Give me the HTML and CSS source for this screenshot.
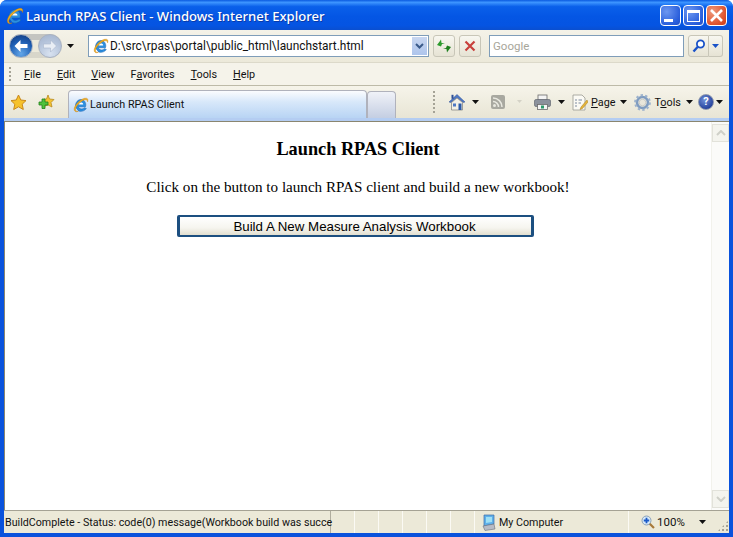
FILE: index.html
```html
<!DOCTYPE html>
<html lang="en">
<head>
  <meta charset="UTF-8">
  <title>Launch RPAS Client - Windows Internet Explorer</title>
  <link rel="stylesheet" href="styles.css">
</head>
<body>
  <svg class="defs" width="0" height="0">
    <defs>
      <symbol id="ie" viewBox="0 0 18 18">
        <path d="M3 12 C2 6 6 2 10 3 C14 4 15 8 14 11 L6 11 C7 14 11 14 13 12 L15 13 C12 17 6 17 5 14 C4.500 13 4 12.500 3 12 Z" fill="#2b8fe0" stroke="#1660b0" stroke-width=".6"/>
        <path d="M6.200 8.500 L11.500 8.500 C11.300 5.500 6.800 5.500 6.200 8.500 Z" fill="#fff"/>
        <path d="M1.500 15 C0 11 7 3 13 1.500 C16 .8 17.500 2 16.500 5.500 C16 3 14.500 2.800 12.500 3.500 C8 5 3 11 2.800 14 C2.700 15.500 3.800 16.500 6 16 C4 17.200 2.200 16.800 1.500 15 Z" fill="#f0b020" stroke="#c07a10" stroke-width=".4"/>
      </symbol>
      <symbol id="arrow" viewBox="0 0 7 4">
        <path d="M0 0 H7 L3.500 4 Z" fill="#111"/>
      </symbol>
      <symbol id="arrow-off" viewBox="0 0 7 4">
        <path d="M1 0 H6 L3.500 3 Z" fill="#d4d2c6"/>
      </symbol>
    </defs>
  </svg>

  <div class="window">
    <div class="titlebar">
      <svg class="title-icon"><use href="#ie"/></svg>
      <span class="title-text">Launch RPAS Client - Windows Internet Explorer</span>
      <div class="caption-btn btn-min"><span class="min-glyph"></span></div>
      <div class="caption-btn btn-max"><span class="max-glyph"></span></div>
      <div class="caption-btn btn-close">
        <svg width="15" height="15" viewBox="0 0 15 15"><path d="M2 2 L13 13 M13 2 L2 13" stroke="#fff" stroke-width="2.600"/></svg>
      </div>
    </div>

    <div class="frame">
      <div class="navbar">
        <div class="back-forward">
          <div class="nav-circle nav-back">
            <svg width="16" height="14" viewBox="0 0 16 14"><path d="M7.500 1 L1.500 7 L7.500 13 V9 H14.500 V5 H7.500 Z" fill="#fff"/></svg>
          </div>
          <div class="nav-circle nav-forward">
            <svg width="16" height="14" viewBox="0 0 16 14"><path d="M8.500 1 L14.500 7 L8.500 13 V9 H1.500 V5 H8.500 Z" fill="#e9eef5" stroke="#a9b7cc" stroke-width=".6"/></svg>
          </div>
        </div>
        <svg class="arrow nav-arrow"><use href="#arrow"/></svg>
        <div class="address">
          <svg class="addr-icon"><use href="#ie"/></svg>
          <span class="addr-text">D:\src\rpas\portal\public_html\launchstart.html</span>
          <div class="addr-combo">
            <svg width="9" height="6" viewBox="0 0 9 6"><path d="M1 1 L4.500 4.500 L8 1" fill="none" stroke="#3a5a8a" stroke-width="2"/></svg>
          </div>
        </div>
        <div class="square-btn refresh-btn">
          <svg width="16" height="16" viewBox="0 0 16 16">
            <path d="M1 7 L4 3 L5 1.500 L5.500 5 L9 5 L6 6 L5 8.500 Z" fill="#2c9a2c"/>
            <path d="M15 9 L12 13 L11 14.500 L10.500 11 L7 11 L10 10 L11 7.500 Z" fill="#1d7f1d"/>
          </svg>
        </div>
        <div class="square-btn stop-btn">
          <svg width="12" height="12" viewBox="0 0 12 12"><path d="M1.500 1.500 L10.500 10.500 M10.500 1.500 L1.500 10.500" stroke="#c8403c" stroke-width="2.200"/></svg>
        </div>
        <div class="search-box">Google</div>
        <div class="search-btn">
          <svg width="14" height="14" viewBox="0 0 14 14"><circle cx="8.500" cy="5" r="3.600" fill="#fff" stroke="#1a52c8" stroke-width="1.800"/><path d="M5.800 7.800 L1.500 12.500" stroke="#1a52c8" stroke-width="2.400"/></svg>
        </div>
        <div class="search-drop">
          <svg width="7" height="4" viewBox="0 0 7 4"><path d="M0 0 H7 L3.500 4 Z" fill="#1a52c8"/></svg>
        </div>
      </div>

      <div class="menubar">
        <div class="gripper"></div>
        <span class="menu-item item-file"><u>F</u>ile</span>
        <span class="menu-item item-edit"><u>E</u>dit</span>
        <span class="menu-item item-view"><u>V</u>iew</span>
        <span class="menu-item item-fav">F<u>a</u>vorites</span>
        <span class="menu-item item-tools"><u>T</u>ools</span>
        <span class="menu-item item-help"><u>H</u>elp</span>
      </div>

      <div class="tabbar">
        <svg class="star-icon" width="17" height="17" viewBox="0 0 17 17"><path d="M8.500 1 L10.800 6 L16 6.600 L12.200 10.200 L13.300 15.500 L8.500 12.800 L3.700 15.500 L4.800 10.200 L1 6.600 L6.200 6 Z" fill="#f6c22c" stroke="#c9881a"/></svg>
        <svg class="add-icon" width="17" height="17" viewBox="0 0 17 17">
          <path d="M10 1 L11.500 5 L16 5.500 L13 8.500 L14 13 L10 11 L7 12 L6 5 L8.500 5 Z" fill="#f3c333" stroke="#b98a1e" stroke-width=".8"/>
          <path d="M4 5 H7 V8 H10 V11 H7 V14.500 H4 V11 H1 V8 H4 Z" fill="#4fc13c" stroke="#23801c" stroke-width=".8"/>
        </svg>
        <div class="tab tab-active">
          <svg class="tab-icon"><use href="#ie"/></svg>
          <span>Launch RPAS Client</span>
        </div>
        <div class="tab tab-new"></div>
        <div class="gripper gripper-tools"></div>
        <svg class="home-icon" width="18" height="18" viewBox="0 0 18 18">
          <path d="M1 9 L9 1.500 L17 9 L15 9.500 L9 4.500 L3 9.500 Z" fill="#4f78c4" stroke="#2d4f95" stroke-width=".5"/>
          <path d="M3.500 9.500 L9 5 L14.500 9.500 V17 H3.500 Z" fill="#f3f0e6" stroke="#7d7d78" stroke-width=".7"/>
          <rect x="10.500" y="10.500" width="3" height="6.500" fill="#2d5aa8"/>
          <rect x="5" y="10.500" width="3" height="3" fill="#4f78c4"/>
          <rect x="3.500" y="1.800" width="2" height="4" fill="#2d4f95"/>
        </svg>
        <svg class="arrow arrow-home"><use href="#arrow"/></svg>
        <svg class="feed-icon" width="14" height="14" viewBox="0 0 14 14">
          <rect width="14" height="14" rx="2" fill="#a8a8a0"/>
          <circle cx="3.500" cy="10.500" r="1.500" fill="#e8e8e0"/>
          <path d="M2 6.500 A5.500 5.500 0 0 1 7.500 12 M2 3 A9 9 0 0 1 11 12" fill="none" stroke="#e8e8e0" stroke-width="1.500"/>
        </svg>
        <svg class="arrow arrow-feed"><use href="#arrow-off"/></svg>
        <svg class="print-icon" width="17" height="16" viewBox="0 0 17 16">
          <rect x="4" y="1" width="9" height="5" fill="#f4f4f4" stroke="#6a6a6a" stroke-width=".8"/>
          <rect x=".5" y="5.500" width="16" height="7" rx="1.500" fill="#8b919c" stroke="#555b66" stroke-width=".6"/>
          <rect x="3.500" y="10.500" width="10" height="5" fill="#f4f4f4" stroke="#6a6a6a" stroke-width=".8"/>
          <rect x="7" y="11.500" width="3" height="3" fill="#2c9a6c"/>
        </svg>
        <svg class="arrow arrow-print"><use href="#arrow"/></svg>
        <svg class="page-icon" width="16" height="17" viewBox="0 0 16 17">
          <path d="M1 1 H10 L13 4 V16 H1 Z" fill="#fbfaf4" stroke="#9a9a92" stroke-width=".8"/>
          <path d="M3 6 H5 M6.500 6 H10 M3 9 H5 M6.500 9 H9 M3 12 H5" stroke="#7c8aa0"/>
          <path d="M15 6 L9 13 L8 15.500 L10.500 14.500 L16 8 Z" fill="#e6b53a" stroke="#a77d1e" stroke-width=".5"/>
        </svg>
        <span class="tool-label label-page"><u>P</u>age</span>
        <svg class="arrow arrow-page"><use href="#arrow"/></svg>
        <svg class="gear-icon" width="17" height="17" viewBox="0 0 17 17">
          <circle cx="8.500" cy="8.500" r="5.500" fill="none" stroke="#7f9cc0" stroke-width="2.600"/>
          <circle cx="8.500" cy="8.500" r="7.300" fill="none" stroke="#9db2cc" stroke-width="2.200" stroke-dasharray="2.400 2.200"/>
          <circle cx="8.500" cy="8.500" r="3.300" fill="#e9e6da" stroke="#b5b8b8" stroke-width=".6"/>
        </svg>
        <span class="tool-label label-tools">T<u>o</u>ols</span>
        <svg class="arrow arrow-tools"><use href="#arrow"/></svg>
        <div class="help-icon">?</div>
        <svg class="arrow arrow-help"><use href="#arrow"/></svg>
      </div>
      <div class="tab-strip"></div>

      <div class="viewport">
        <div class="content">
          <h3 class="page-title">Launch RPAS Client</h3>
          <p class="page-text">Click on the button to launch RPAS client and build a new workbook!</p>
          <button class="build-btn">Build A New Measure Analysis Workbook</button>
        </div>
        <div class="scrollbar">
          <div class="scroll-btn">
            <svg width="10" height="6" viewBox="0 0 10 6"><path d="M1 5 L5 1 L9 5" fill="none" stroke="#cfd0c8" stroke-width="2"/></svg>
          </div>
          <div class="scroll-btn">
            <svg width="10" height="6" viewBox="0 0 10 6"><path d="M1 1 L5 5 L9 1" fill="none" stroke="#cfd0c8" stroke-width="2"/></svg>
          </div>
        </div>
      </div>

      <div class="statusbar">
        <div class="pane pane-msg">BuildComplete - Status: code(0) message(Workbook build was succe</div>
        <div class="pane pane-small"></div>
        <div class="pane pane-small"></div>
        <div class="pane pane-small"></div>
        <div class="pane pane-small"></div>
        <div class="pane pane-small"></div>
        <div class="pane pane-small"></div>
        <div class="pane pane-zone">
          <svg class="zone-icon" width="14" height="17" viewBox="0 0 14 17">
            <path d="M2 1 L12 1 L12 10 L2 12 Z" fill="#5fb0ea" stroke="#3f6ea8" stroke-width=".7"/>
            <path d="M4 3 L10 3 L10 8 L4 9 Z" fill="#9fe0f5"/>
            <path d="M1 12 L12 10 L13 15 L3 16.500 Z" fill="#b8bcc6" stroke="#6a6f7c" stroke-width=".6"/>
          </svg>
          <span>My Computer</span>
        </div>
        <div class="pane pane-zoom">
          <svg class="zoom-icon" width="14" height="14" viewBox="0 0 14 14">
            <path d="M8.500 8.500 L13 13" stroke="#a8793a" stroke-width="2.200"/>
            <circle cx="5.500" cy="5.500" r="4.500" fill="#d6e8f7" stroke="#8aa0b8"/>
            <path d="M5.500 2.800 V8.200 M2.800 5.500 H8.200" stroke="#1a5ac8" stroke-width="1.800"/>
          </svg>
          <span class="zoom-text">100%</span>
          <svg class="arrow arrow-zoom"><use href="#arrow"/></svg>
          <div class="resize-grip"></div>
        </div>
      </div>
    </div>
  </div>
</body>
</html>
```

FILE: styles.css
```css
html, body {
  margin: 0;
  padding: 0;
}

body {
  width: 733px;
  height: 537px;
  overflow: hidden;
  background: #fff;
  font-family: Roboto, "Noto Sans", sans-serif;
  font-size: 10.800px;
  color: #111;
}

.defs {
  display: block;
  height: 0;
}

.window {
  width: 733px;
  height: 537px;
  display: flex;
  flex-direction: column;
  background: #0a52dc;
  border-radius: 7px 7px 0 0;
  overflow: hidden;
}

/* title bar */
.titlebar {
  height: 30px;
  flex: none;
  display: flex;
  align-items: center;
  padding: 1px 6px 0 6px;
  box-sizing: border-box;
  background: linear-gradient(#0a5ae0 0%, #3d95ff 8%, #0a60ea 22%, #0456e4 55%, #0554e2 85%, #0a4fd0 100%);
}

.title-icon {
  width: 18px;
  height: 18px;
  flex: none;
}

.title-text {
  margin-left: 2px;
  flex: 1;
  color: #fff;
  font-family: "Noto Sans", sans-serif;
  font-size: 13.100px;
  font-weight: 500;
  white-space: nowrap;
  text-shadow: 1px 1px 0 #0a3aa8;
}

.caption-btn {
  width: 21px;
  height: 21px;
  margin-left: 2px;
  flex: none;
  box-sizing: border-box;
  display: flex;
  align-items: center;
  justify-content: center;
  border: 1px solid #fff;
  border-radius: 4px;
  background: radial-gradient(circle at 30% 30%, #6d97f0, #2a5fdc 70%, #2150c8);
}

.btn-close {
  background: radial-gradient(circle at 30% 30%, #ee9a7c, #df5530 65%, #c83a18);
}

.min-glyph {
  width: 9px;
  height: 3px;
  margin: 9px 4px 0 0;
  background: #fff;
}

.max-glyph {
  width: 13px;
  height: 12px;
  box-sizing: border-box;
  border: 1px solid #fff;
  border-top-width: 3px;
}

.frame {
  flex: 1;
  margin: 0 4px 4px;
  display: flex;
  flex-direction: column;
  background: #ece9d8;
  min-height: 0;
}

/* address row */
.navbar {
  height: 32px;
  flex: none;
  display: flex;
  align-items: center;
  background: linear-gradient(#f4f2e8, #ece9da);
}

.back-forward {
  margin-left: 5px;
  display: flex;
  gap: 5px;
  border-radius: 13px;
  background: linear-gradient(#c4c4c0 0 25%, #ece9da 25% 75%, #d8d6ca 75%);
}

.nav-circle {
  width: 24px;
  height: 24px;
  box-sizing: border-box;
  border-radius: 50%;
  display: flex;
  align-items: center;
  justify-content: center;
}

.nav-back {
  background: radial-gradient(circle at 50% 85%, #62a6e8, #1f5fb4 55%, #143f86 90%);
  border: 1px solid #aeb6c2;
}

.nav-forward {
  background: radial-gradient(circle at 50% 85%, #d8e2f0, #b4c3da 60%, #a2b2cc);
  border: 1px solid #a9b2c2;
}

.arrow {
  display: block;
  width: 7px;
  height: 4px;
  flex: none;
}

.nav-arrow {
  margin-left: 5px;
}

.address {
  width: 341px;
  height: 22px;
  margin-left: 14px;
  box-sizing: border-box;
  display: flex;
  align-items: center;
  background: #fff;
  border: 1px solid #7f9db9;
}

.addr-icon {
  width: 16px;
  height: 16px;
  margin-left: 4px;
  flex: none;
}

.addr-text {
  margin-left: 1px;
  flex: 1;
  font-size: 11.900px;
  white-space: nowrap;
}

.addr-combo {
  width: 15px;
  height: 18px;
  margin-right: 1px;
  display: flex;
  align-items: center;
  justify-content: center;
  background: linear-gradient(#c8d6f0, #aec5ec);
}

.square-btn {
  width: 22px;
  height: 22px;
  box-sizing: border-box;
  display: flex;
  align-items: center;
  justify-content: center;
  border: 1px solid #c8c6b8;
  border-radius: 3px;
  background: linear-gradient(#f8f7f0, #e6e3d4);
}

.refresh-btn {
  margin-left: 4px;
}

.stop-btn {
  margin-left: 4px;
}

.search-box {
  width: 195px;
  height: 22px;
  margin-left: 8px;
  padding-left: 3px;
  box-sizing: border-box;
  font-size: 11.500px;
  line-height: 20px;
  background: #fff;
  border: 1px solid #7f9db9;
  color: #a8a69a;
}

.search-btn {
  width: 21px;
  height: 22px;
  margin-left: 4px;
  box-sizing: border-box;
  display: flex;
  align-items: center;
  justify-content: center;
  border: 1px solid #c8c6b8;
  border-radius: 3px 0 0 3px;
  background: linear-gradient(#f8f7f0, #e6e3d4);
}

.search-drop {
  width: 14px;
  height: 22px;
  box-sizing: border-box;
  display: flex;
  align-items: center;
  justify-content: center;
  border: 1px solid #c8c6b8;
  border-left: 0;
  border-radius: 0 3px 3px 0;
  background: linear-gradient(#f8f7f0, #e6e3d4);
}

/* menu row */
.menubar {
  height: 24px;
  flex: none;
  box-sizing: border-box;
  display: flex;
  align-items: center;
  padding-top: 1px;
  background: #f5f3ea;
  border-top: 1px solid #dcd9ca;
  border-bottom: 1px solid #bdbaa8;
}

.gripper {
  width: 2px;
  height: 15px;
  margin-left: 5px;
  flex: none;
  background: repeating-linear-gradient(#a5a396 0 2px, transparent 2px 4px);
}

.menu-item {
  white-space: nowrap;
}

.item-file { margin-left: 13px; }
.item-edit { margin-left: 16px; }
.item-view { margin-left: 16px; }
.item-fav { margin-left: 16px; }
.item-tools { margin-left: 16px; }
.item-help { margin-left: 16px; }

/* tab and command row */
.tabbar {
  height: 32px;
  flex: none;
  display: flex;
  align-items: center;
  background: linear-gradient(#f6f4ea, #e8e5d5);
}

.star-icon {
  margin-left: 6px;
  flex: none;
}

.add-icon {
  margin-left: 11px;
  flex: none;
}

.tab {
  align-self: flex-end;
  box-sizing: border-box;
  border: 1px solid #b0b2bc;
  border-bottom: 0;
  border-radius: 4px 4px 0 0;
  flex: none;
}

.tab-active {
  width: 299px;
  height: 28px;
  margin-left: 13px;
  padding-left: 4px;
  display: flex;
  align-items: center;
  background: linear-gradient(#fbfcfe, #d8e8fa 40%, #b8d4f4);
}

.tab-icon {
  width: 16px;
  height: 16px;
  margin-right: 1px;
  flex: none;
}

.tab-new {
  width: 29px;
  height: 27px;
  background: linear-gradient(#f0f2f8, #c4cee2);
}

.gripper-tools {
  height: 22px;
  margin-left: 37px;
}

.tool-label {
  white-space: nowrap;
}

.home-icon { margin-left: 13px; flex: none; }
.arrow-home { margin-left: 6px; }
.feed-icon { margin-left: 12px; flex: none; }
.arrow-feed { margin-left: 11px; }
.print-icon { margin-left: 11px; flex: none; }
.arrow-print { margin-left: 7px; }
.page-icon { margin-left: 7px; flex: none; }
.label-page { margin-left: 3px; }
.arrow-page { margin-left: 5px; }
.gear-icon { margin-left: 7px; flex: none; }
.label-tools { margin-left: 3px; }
.arrow-tools { margin-left: 5px; }
.arrow-help { margin-left: 2px; }

.help-icon {
  width: 16px;
  height: 16px;
  margin-left: 5px;
  flex: none;
  border-radius: 50%;
  background: radial-gradient(circle at 40% 35%, #6f8fd8, #23409a 75%);
  border: 1px solid #8d97ad;
  box-sizing: border-box;
  color: #fff;
  font-size: 11px;
  font-weight: 700;
  line-height: 14px;
  text-align: center;
}

.tab-strip {
  height: 4px;
  flex: none;
  box-sizing: border-box;
  background: #b4cdf2;
  border-bottom: 1px solid #8a8670;
}

/* page area */
.viewport {
  flex: 1;
  display: flex;
  min-height: 0;
  background: #fff;
  border-left: 1px solid #8a8670;
}

.content {
  flex: 1;
  text-align: center;
  font-family: "Liberation Serif", serif;
  color: #000;
}

.page-title {
  margin: 16px 0 0;
  font-size: 18.300px;
  line-height: 22px;
  font-weight: 700;
}

.page-text {
  margin: 18px 0 0;
  font-size: 15.120px;
  line-height: 19px;
}

.build-btn {
  display: block;
  width: 357px;
  height: 22px;
  margin: 18px 0 0 172px;
  padding: 0 2px 0 0;
  font-family: "Liberation Sans", sans-serif;
  font-size: 13.300px;
  color: #000;
  background: linear-gradient(#fff, #f6f5ef 60%, #e2dfd0);
  border: solid #1c4f80;
  border-width: 2px 3px;
  border-radius: 2px;
}

.scrollbar {
  width: 18px;
  padding: 2px 0;
  box-sizing: border-box;
  flex: none;
  display: flex;
  flex-direction: column;
  justify-content: space-between;
  background: #fbfbf9;
  border-left: 1px solid #f2f2ec;
}

.scroll-btn {
  height: 16px;
  display: flex;
  align-items: center;
  justify-content: center;
  background: #f4f4ee;
  border: 1px solid #e2e2da;
}

/* status bar */
.statusbar {
  height: 23px;
  flex: none;
  box-sizing: border-box;
  display: flex;
  align-items: center;
  background: #ece9d8;
  border-top: 1px solid #a5a294;
  font-size: 10.700px;
}

.pane {
  height: 100%;
  box-sizing: border-box;
  display: flex;
  align-items: center;
  flex: none;
  border-right: 1px solid #fbfaf4;
}

.pane-msg {
  width: 327px;
  padding-left: 1px;
  white-space: nowrap;
  border-right: 1px solid #b0ad9e;
}

.pane-small {
  width: 24px;
}

.pane-zone {
  width: 154px;
  padding-left: 7px;
}

.zone-icon {
  margin-right: 3px;
}

.pane-zoom {
  flex: 1;
  padding-left: 12px;
  border-right: 0;
  position: relative;
}

.zoom-icon {
  margin-right: 2px;
}

.zoom-text {
  font-size: 11.500px;
}

.arrow-zoom {
  margin-left: 14px;
}

.resize-grip {
  position: absolute;
  right: 0;
  bottom: 1px;
  width: 12px;
  height: 12px;
  background: radial-gradient(circle, #a5a294 1px, transparent 1.500px) 0 0 / 4px 4px;
  clip-path: polygon(100% 0, 100% 100%, 0 100%);
}
```
